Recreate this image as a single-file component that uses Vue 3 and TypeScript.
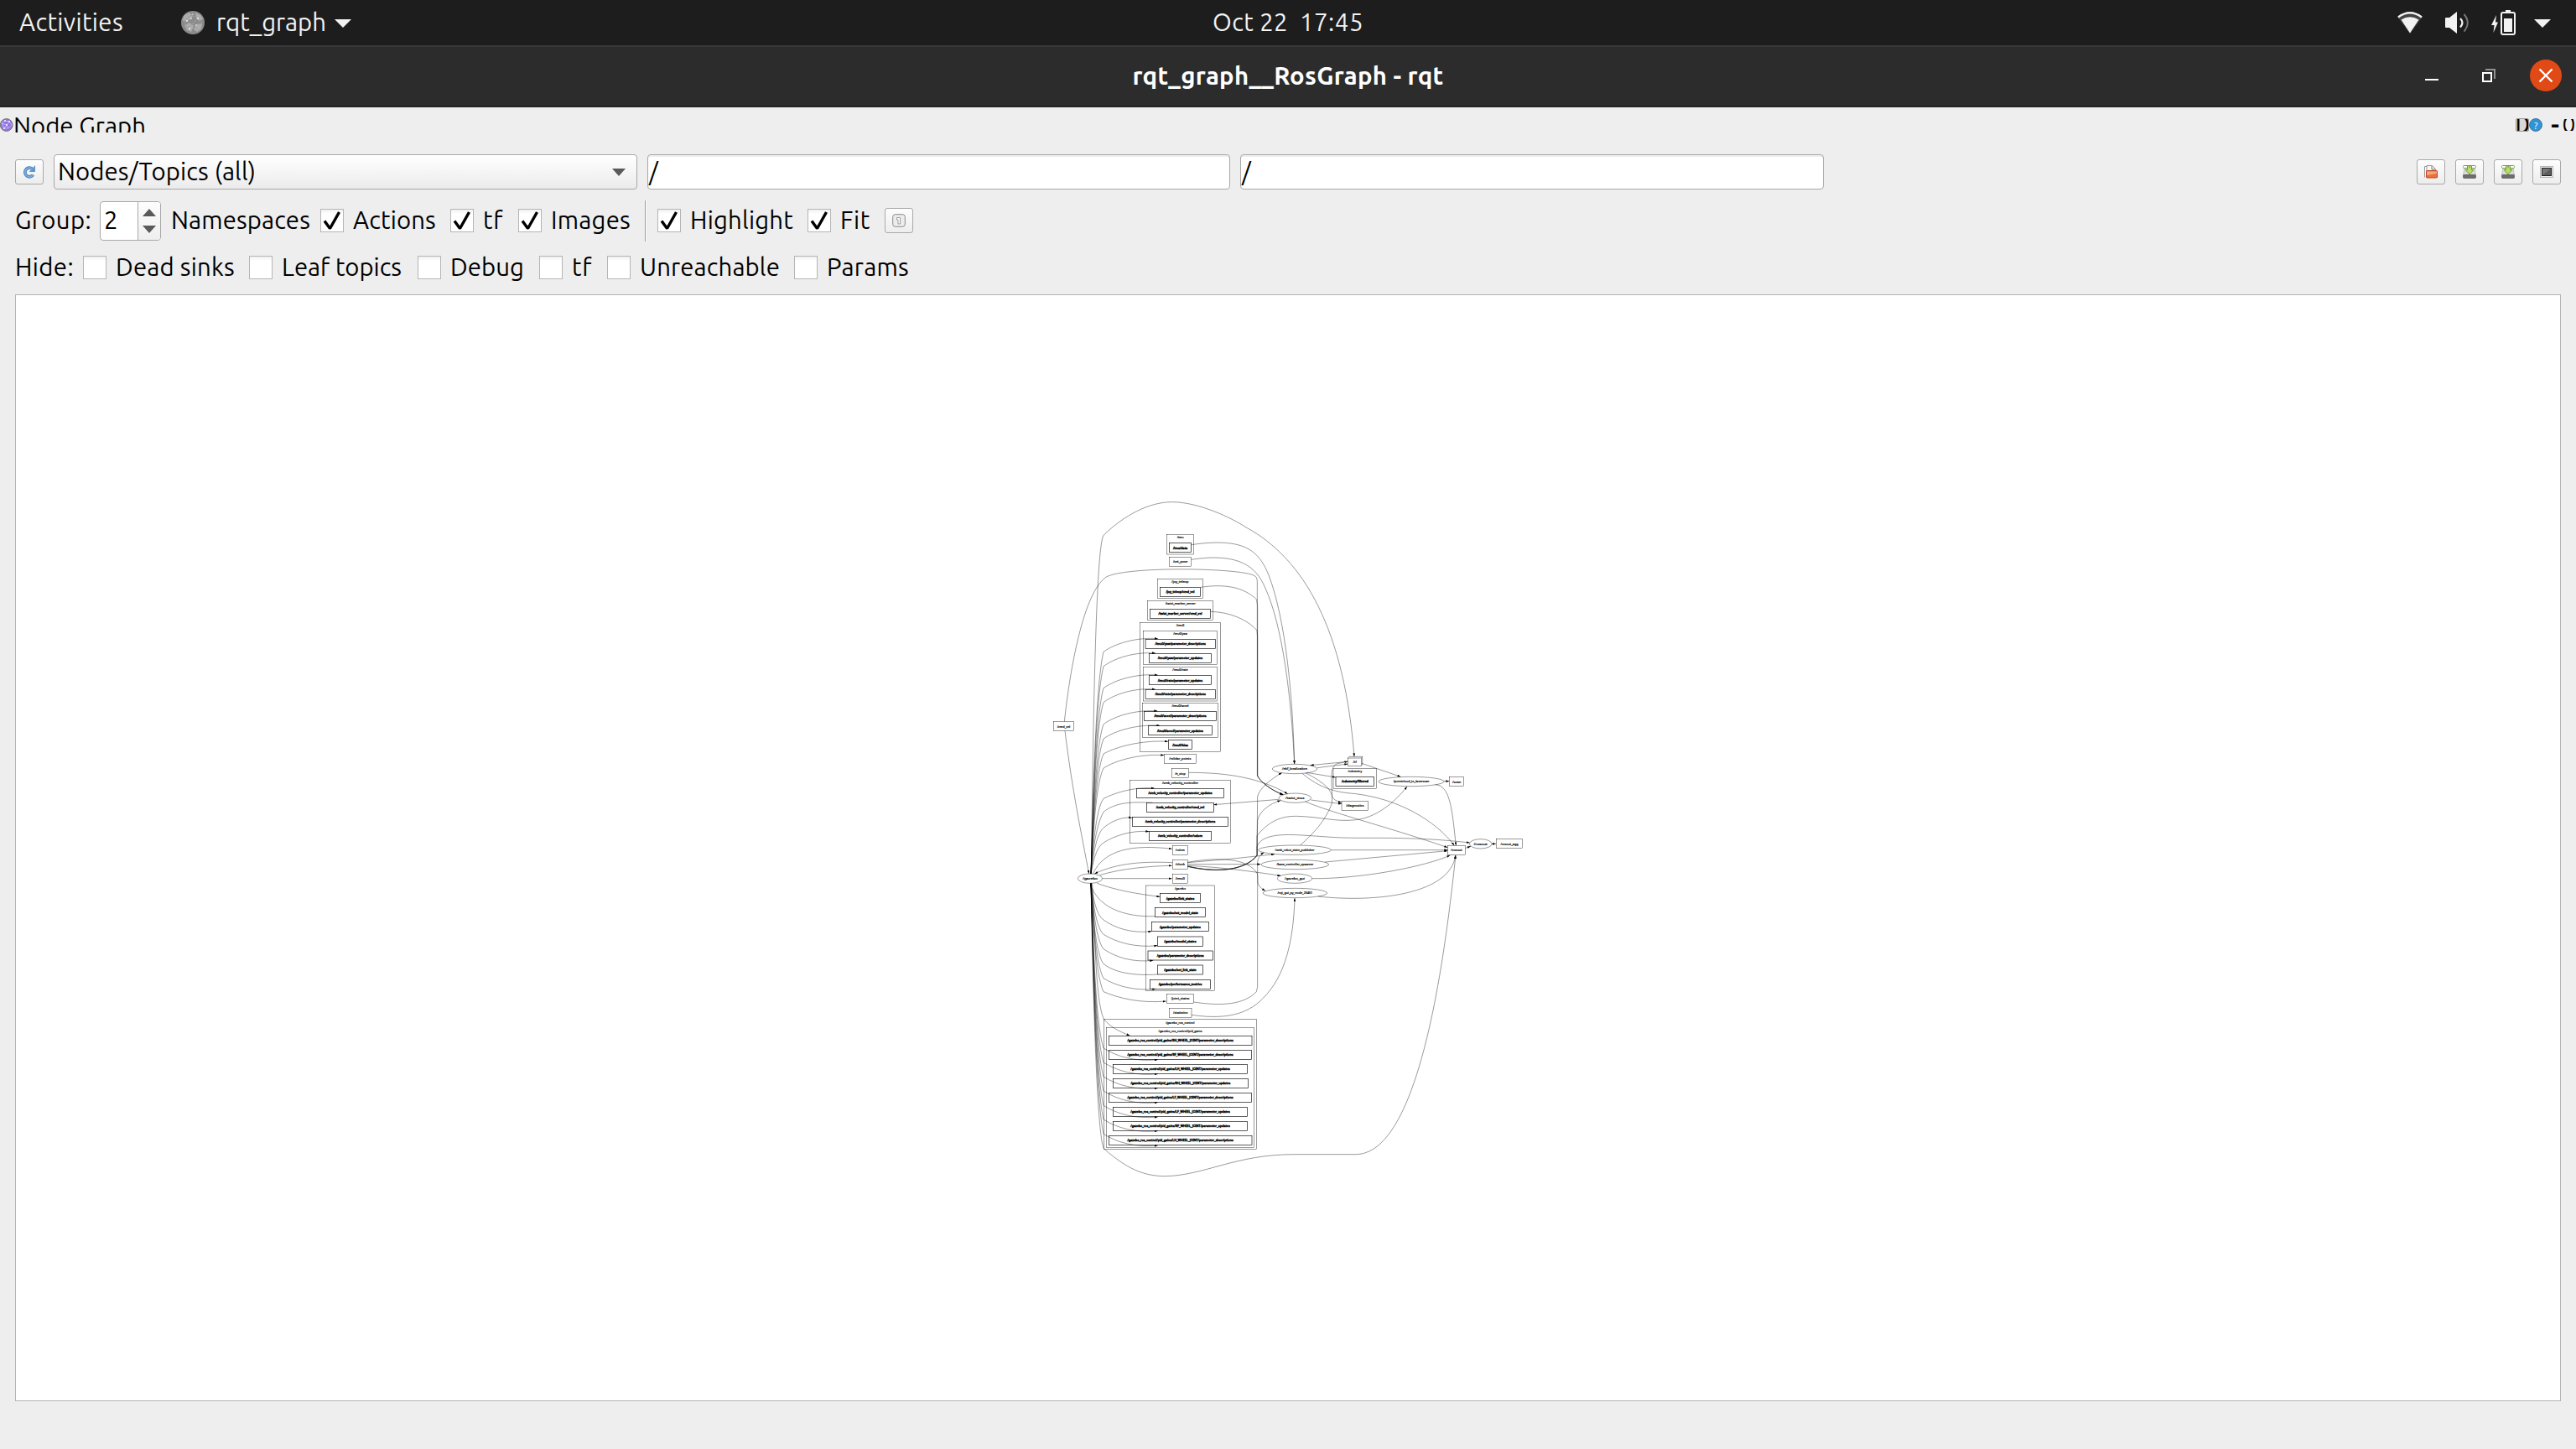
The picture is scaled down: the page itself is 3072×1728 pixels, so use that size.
<script setup lang="ts">
type Box = [label: string, x1: number, y1: number, x2: number, y2: number]
type Oval = [label: string, cx: number, cy: number, rx: number]

// Spaces the letters of a label so that it takes the given width in pixels.
const vFit = {
  mounted(el: HTMLElement, binding: { value: number }) {
    el.style.letterSpacing = '0px'
    const natural = el.getBoundingClientRect().width
    const count = (el.textContent ?? '').length
    el.style.letterSpacing = `${(binding.value - natural) / count}px`
  },
}

const groupOptions = [
  { label: 'Actions', text: 99, width: 116 },
  { label: 'tf', text: 24, width: 42 },
  { label: 'Images', text: 95, width: 112 },
]
const viewOptions = [
  { label: 'Highlight', text: 123, width: 140 },
  { label: 'Fit', text: 36, width: 53 },
]
const hideOptions = [
  { label: 'Dead sinks', text: 142, width: 159 },
  { label: 'Leaf topics', text: 143, width: 162 },
  { label: 'Debug', text: 88, width: 106 },
  { label: 'tf', text: 24, width: 42 },
  { label: 'Unreachable', text: 167, width: 184 },
  { label: 'Params', text: 98, width: 110 },
]

const clusters: Box[] = [
  ['/imu', 455, 172, 550, 243],
  ['/joy_teleop', 421, 331, 583, 401],
  ['/twist_marker_server', 386, 409, 620, 479],
  ['/imu0', 358, 487, 647, 949],
  ['/imu0/yaw', 370, 517, 635, 638],
  ['/imu0/rate', 370, 646, 635, 768],
  ['/imu0/accel', 367, 775, 638, 898],
  ['/smb_velocity_controller', 322, 1051, 683, 1276],
  ['/gazebo', 379, 1428, 626, 1805],
  ['/gazebo_ros_control', 229, 1907, 775, 2372],
  ['/gazebo_ros_control/pid_gains', 238, 1937, 767, 2365],
  ['/odometry', 1050, 1009, 1205, 1081],
]

const pid = '/gazebo_ros_control/pid_gains/'
const nested: Box[] = [
  ['/imu/data', 463, 203, 542, 236],
  ['/joy_teleop/cmd_vel', 430, 361, 575, 394],
  ['/twist_marker_server/cmd_vel', 394, 439, 611, 472],
  ['/imu0/yaw/parameter_descriptions', 378, 547, 628, 580],
  ['/imu0/yaw/parameter_updates', 391, 598, 613, 631],
  ['/imu0/rate/parameter_updates', 391, 677, 613, 710],
  ['/imu0/rate/parameter_descriptions', 378, 727, 628, 760],
  ['/imu0/accel/parameter_descriptions', 374, 805, 631, 838],
  ['/imu0/accel/parameter_updates', 388, 857, 616, 890],
  ['/imu0/bias', 460, 908, 545, 941],
  ['/smb_velocity_controller/parameter_updates', 346, 1081, 659, 1114],
  ['/smb_velocity_controller/cmd_vel', 383, 1132, 622, 1165],
  ['/smb_velocity_controller/parameter_descriptions', 331, 1183, 674, 1216],
  ['/smb_velocity_controller/odom', 392, 1234, 613, 1267],
  ['/gazebo/link_states', 431, 1457, 574, 1490],
  ['/gazebo/set_model_state', 412, 1508, 593, 1541],
  ['/gazebo/parameter_updates', 400, 1559, 604, 1592],
  ['/gazebo/model_states', 421, 1611, 583, 1645],
  ['/gazebo/parameter_descriptions', 387, 1662, 619, 1695],
  ['/gazebo/set_link_state', 421, 1713, 584, 1746],
  ['/gazebo/performance_metrics', 395, 1765, 610, 1798],
  [pid + 'RH_WHEEL_JOINT/parameter_descriptions', 247, 1966, 759, 2000],
  [pid + 'RF_WHEEL_JOINT/parameter_descriptions', 247, 2017, 758, 2051],
  [pid + 'LH_WHEEL_JOINT/parameter_updates', 262, 2068, 743, 2102],
  [pid + 'RH_WHEEL_JOINT/parameter_updates', 262, 2119, 745, 2153],
  [pid + 'LF_WHEEL_JOINT/parameter_descriptions', 247, 2170, 758, 2204],
  [pid + 'LF_WHEEL_JOINT/parameter_updates', 262, 2221, 743, 2255],
  [pid + 'RF_WHEEL_JOINT/parameter_updates', 262, 2272, 743, 2306],
  [pid + 'LH_WHEEL_JOINT/parameter_descriptions', 247, 2323, 759, 2357],
  ['/odometry/filtered', 1059, 1039, 1196, 1073],
]

const topics: Box[] = [
  ['/set_pose', 463, 253, 542, 286],
  ['/cmd_vel', 49, 842, 122, 875],
  ['/rslidar_points', 445, 959, 559, 991],
  ['/e_stop', 472, 1010, 533, 1043],
  ['/odom', 475, 1285, 529, 1318],
  ['/clock', 475, 1336, 529, 1369],
  ['/imu0', 475, 1387, 529, 1420],
  ['/joint_states', 454, 1816, 551, 1849],
  ['/statistics', 463, 1867, 543, 1900],
  ['/diagnostics', 1080, 1126, 1175, 1159],
  ['/scan', 1466, 1040, 1517, 1073],
  ['/rosout', 1459, 1285, 1523, 1318],
  ['/rosout_agg', 1633, 1262, 1727, 1295],
]

const ovals: Oval[] = [
  ['/gazebo', 180, 1403, 44],
  ['/ekf_localization', 912, 1011, 80],
  ['/twist_mux', 913, 1115, 58],
  ['/smb_robot_state_publisher', 912, 1301, 130],
  ['/base_controller_spawner', 913, 1353, 121],
  ['/gazebo_gui', 912, 1403, 62],
  ['/rqt_gui_py_node_23451', 913, 1455, 115],
  ['/pointcloud_to_laserscan', 1329, 1056, 117],
  ['/rosout', 1577, 1279, 40],
]

// Edges that leave /gazebo upwards: bend height, then the arrow's tip.
const upward: [number, number, number][] = [
  [592, 423, 545],
  [644, 414, 597],
  [722, 422, 675],
  [773, 413, 726],
  [851, 421, 804],
  [903, 430, 856],
  [957, 459, 913],
  [1008, 445, 962],
  [1117, 410, 1080],
  [1222, 330, 1186],
  [1275, 391, 1235],
]
const downward: [number, number, number][] = [
  [1551, 400, 1592],
  [1603, 421, 1643],
  [1655, 406, 1696],
  [1760, 415, 1798],
  [1808, 452, 1842],
  [2010, 422, 2051],
  [2061, 422, 2102],
  [2112, 422, 2153],
  [2163, 422, 2204],
  [2215, 422, 2256],
  [2265, 422, 2306],
  [2317, 422, 2358],
]

const arrows: string[] = [
  ...upward.map(([y, tx, ty]) => {
    const reach = (1386 - y) * 0.3
    return `M183 1386 C190 ${1386 - reach} 199 ${y + reach * 0.5} 228 ${y} C${228 + (tx - 228) * 0.2} ${ty + 18} ${228 + (tx - 228) * 0.6} ${ty - 6} ${tx} ${ty}`
  }),
  ...downward.map(([y, tx, ty]) => {
    const reach = (y - 1420) * 0.3
    return `M183 1420 C190 ${1420 + reach} 199 ${y - reach * 0.5} 228 ${y} C${228 + (tx - 228) * 0.25} ${ty - 10} ${228 + (tx - 228) * 0.6} ${ty + 8} ${tx} ${ty}`
  }),
  'M188 1420 C198 1620 200 1850 230 1907 C255 1937 285 1950 322 1965',
  'M190 1386 C230 1300 330 1280 473 1297',
  'M215 1391 C290 1367 400 1358 473 1357',
  'M475 1346 C380 1342 280 1345 196 1386',
  'M224 1403 H473',
  'M205 1420 C270 1445 360 1460 430 1468',
  'M412 1538 C300 1542 205 1505 181 1421',
  'M90 875 C115 1080 150 1250 176 1386',
  // long loops round the whole graph
  'M184 1386 C190 900 200 220 228 175 C300 105 390 56 473 56 C570 56 690 115 735 145 C950 260 1090 520 1125 967',
  'M183 1420 C190 1800 205 2340 230 2370 C310 2440 370 2468 450 2468 C590 2465 700 2390 910 2390 H1135 C1370 2380 1455 1620 1488 1320',
  'M88 842 C105 680 150 400 230 330 C270 285 700 290 765 318 Q777 322 778 340 V1035 C785 1050 820 1085 871 1103',
  'M576 361 C680 345 740 370 776 405 L779 430 V1035 C785 1052 822 1086 871 1103',
  'M611 448 C680 450 740 475 777 515 L779 540 V1035 C787 1053 822 1085 871 1103',
  'M542 209 C740 180 785 235 820 320 C880 480 905 750 911 993',
  'M542 262 C715 235 775 290 805 360 C870 500 900 760 911 993',
  'M533 1024 C680 1024 790 1045 887 1100',
  'M855 1120 L622 1139',
  // consumers of /clock
  'M529 1346 Q680 1335 840 1316',
  'M529 1352 H790',
  'M529 1357 C650 1362 760 1378 862 1393',
  'M529 1345 C640 1325 745 1330 778 1385 C784 1410 768 1425 807 1447',
  'M529 1359 C620 1380 730 1380 777 1320 L779 1110 C785 1080 830 1045 866 1025',
  'M529 1359 C620 1381 730 1380 777 1320 L779 1195 C785 1165 820 1135 862 1124',
  'M529 1360 C620 1382 730 1380 778 1320 L777 1250 C830 1185 880 1180 920 1180 C1000 1182 1060 1200 1120 1194 C1200 1190 1270 1130 1314 1074',
  'M529 1360 C620 1380 730 1381 778 1320 L777 1290 C790 1245 870 1245 920 1247 C1060 1255 1040 1258 1180 1258 C1350 1257 1450 1265 1538 1275',
  'M551 1845 C650 1860 730 1855 775 1808 L779 1790 V1345 C780 1328 790 1317 802 1310',
  'M543 1891 C640 1905 735 1900 800 1830 C880 1750 908 1620 912 1473',
  // sensor fusion, transforms and logging
  'M992 1007 L1102 993',
  'M1102 985 L968 998',
  'M955 1024 L1058 1041',
  'M950 1025 C1010 1055 1040 1080 1046 1110 Q1052 1125 1080 1131',
  'M940 1028 C990 1070 1040 1090 1100 1097 C1280 1110 1420 1200 1483 1285',
  'M970 1122 L1080 1136',
  'M950 1128 C1050 1170 1250 1220 1459 1292',
  'M932 1284 C980 1240 1020 1200 1045 1135 C1050 1080 1030 1000 1065 992 L1102 984',
  'M1042 1301 H1459',
  'M1020 1344 L1459 1304',
  'M974 1403 C1150 1405 1380 1360 1468 1320',
  'M995 1467 C1200 1490 1470 1460 1487 1320',
  'M1446 1055 H1465',
  'M1415 1067 C1470 1070 1475 1160 1489 1285',
  'M1523 1294 L1542 1288',
  'M1617 1279 H1632',
  'M1152 991 L1291 1039',
]
const lines: string[] = [
  'M183 1386 C190 1290 205 1205 228 1165 C270 1130 330 1128 403 1132',
  'M421 1746 C330 1752 265 1738 228 1708 C205 1680 190 1560 183 1420',
]

const boxText = (w: number) => w * 0.755 - 8
</script>

<template>
  <div class="screen">
    <header class="topbar">
      <div class="top-left">
        <span v-fit="124" class="txt">Activities</span>
        <svg class="app-icon" width="28" height="28" viewBox="0 0 28 28">
          <circle cx="14" cy="14" r="14" fill="#8b8b8b" />
          <path d="M3 6l6-4 5 3-2 5-6 2-4 0zM17 2l6 3 3 5-5 2-3-4zM4 17l6-3 5 4-3 7-5-2zM18 16l7-1-1 6-5 4-4-3z" fill="#adadad" />
          <path d="M4 12L12 5 20 9 25 15M7 21L14 15 20 9M14 15L20 22M4 12L7 21" stroke="#9c9c9c" fill="none" />
          <g fill="#f4f4f4"><circle cx="7" cy="12" r="1" /><circle cx="12" cy="9" r=".8" /><circle cx="20" cy="9" r="1" /><circle cx="10" cy="21" r="1" /><circle cx="18" cy="17" r=".8" /><circle cx="14" cy="4" r=".7" /></g>
        </svg>
        <span v-fit="131" class="txt">rqt_graph</span>
        <svg class="caret" width="20" height="10" viewBox="0 0 20 10"><path d="M0 0H20L10 10Z" fill="#f2f2f2" /></svg>
      </div>
      <div class="clock"><span v-fit="90" class="txt">Oct 22</span><span v-fit="76" class="txt">17:45</span></div>
      <div class="tray">
        <svg width="30" height="26" viewBox="0 0 30 26">
          <path d="M0 6Q15-5.500 30 6L15 26Z" fill="#8a8a8a" opacity=".35" />
          <path d="M1 6.500Q15-4 29 6.500" stroke="#f2f2f2" stroke-width="2.400" fill="none" />
          <path d="M4.500 9.500Q15 3 25.500 9.500L15 25.500Z" fill="#f2f2f2" />
        </svg>
        <svg width="30" height="26" viewBox="0 0 30 26">
          <path d="M0 8Q0 7 1 7H5L14 0V26L5 19H1Q0 19 0 18Z" fill="#f2f2f2" />
          <path d="M18 8Q23 13 18 18.500" stroke="#f2f2f2" stroke-width="2.200" fill="none" />
          <path d="M22.500 3Q31 13 22.500 23.500" stroke="#777" stroke-width="2" fill="none" />
        </svg>
        <svg width="30" height="30" viewBox="0 0 30 30">
          <path d="M6 6L0 18H3.500L2.500 27 8 14.500H5Z" fill="#f2f2f2" />
          <rect x="12" y="3" width="16" height="26" rx="2" fill="none" stroke="#f2f2f2" stroke-width="2" />
          <rect x="17" y="0" width="6" height="3" fill="#f2f2f2" />
          <rect x="15" y="10" width="10" height="16" fill="#f2f2f2" />
        </svg>
        <svg width="20" height="10" viewBox="0 0 20 10"><path d="M0 0H20L10 10Z" fill="#f2f2f2" /></svg>
      </div>
    </header>

    <div class="titlebar">
      <h1><span v-fit="371">rqt_graph__RosGraph - rqt</span></h1>
      <div class="window-buttons">
        <svg width="16" height="16" viewBox="0 0 16 16"><path d="M0 13H16" stroke="#fff" stroke-width="2" /></svg>
        <svg width="16" height="16" viewBox="0 0 16 16">
          <path d="M4 1H15V12" stroke="#909090" stroke-width="2" fill="none" />
          <rect x="1" y="5" width="10" height="10" fill="none" stroke="#fff" stroke-width="2" />
        </svg>
        <svg width="38" height="38" viewBox="0 0 38 38">
          <circle cx="19" cy="19" r="19" fill="#e04a16" />
          <path d="M11.500 11.500L26.500 26.500M26.500 11.500L11.500 26.500" stroke="#fff" stroke-width="2.400" />
        </svg>
      </div>
    </div>

    <div class="dock">
      <svg width="16" height="16" viewBox="0 0 16 16">
        <circle cx="7.700" cy="8" r="7.400" fill="#9175e0" stroke="#777" />
        <path d="M2 6L6 3 11 4 14 8 10 12 5 12 2 6L8 8 11 4M8 8L10 12M8 8L5 12" stroke="#cdbdf6" stroke-width=".8" fill="none" />
        <g fill="#fff"><circle cx="6" cy="3" r=".9" /><circle cx="11" cy="4" r=".9" /><circle cx="8" cy="8" r=".9" /><circle cx="5" cy="12" r=".9" /></g>
      </svg>
      <div class="dock-title"><span v-fit="158" class="txt">Node Graph</span></div>
      <div class="dock-buttons">
        <span class="clip boxed"><b>D</b></span>
        <svg width="16" height="16" viewBox="0 0 16 16">
          <circle cx="8" cy="8" r="7.500" fill="#2d94d8" stroke="#47799c" />
          <text x="8" y="12.500" text-anchor="middle" font-size="12" fill="#fff">?</text>
        </svg>
        <span class="clip dash">-</span>
        <span class="clip round"><b>O</b></span>
      </div>
    </div>

    <div class="row filter-row">
      <button class="tool">
        <svg width="16" height="16" viewBox="0 0 16 16">
          <path d="M12.500 11.500A5.300 5.300 0 1 1 11.500 4.300" fill="none" stroke="#4a83bd" stroke-width="3.800" />
          <path d="M12.500 11.500A5.300 5.300 0 1 1 11.500 4.300" fill="none" stroke="#79aadb" stroke-width="2" />
          <path d="M15 0V8H7.500L10 5.500 12.500 3Z" fill="#5f97cf" />
        </svg>
      </button>
      <div class="combo">
        <span v-fit="236" class="txt">Nodes/Topics (all)</span>
        <svg width="16" height="9" viewBox="0 0 16 9"><path d="M0 0H16L8 9Z" fill="#5a5a5a" /></svg>
      </div>
      <div class="field name-filter"><span class="txt">/</span></div>
      <div class="field"><span class="txt">/</span></div>
      <div class="file-tools">
        <button class="tool">
          <svg width="16" height="16" viewBox="0 0 16 16">
            <path d="M.5 14.500V1.500H3.500M3 14V.5H9.500L13.500 4.500V8" fill="#f8f8f8" stroke="#9a9a9a" />
            <path d="M9 1V5H13" fill="none" stroke="#777" />
            <rect x="2.500" y="6.500" width="13" height="8.500" rx=".8" fill="#e8703c" stroke="#c2421c" />
            <path d="M3 7.500H15V10L3 12Z" fill="#f4a67c" />
          </svg>
        </button>
        <button v-for="n in 2" :key="n" class="tool">
          <svg width="16" height="16" viewBox="0 0 16 16">
            <path d="M2 3H14L15.500 12H.5Z" fill="#dcdcdc" stroke="#aaa" stroke-width=".6" />
            <rect x=".5" y="11.500" width="15" height="4" rx="1" fill="#6d6d6d" stroke="#444" stroke-width=".6" />
            <rect x=".5" y=".5" width="15" height="3" rx="1" fill="#fff" stroke="#6fa33a" />
            <path d="M5.500 1V5.500H3L8 11 13 5.500H10.500V1" fill="#b9dc68" stroke="#6fa33a" />
            <path d="M8 0V3" stroke="#777" />
          </svg>
        </button>
        <button class="tool">
          <svg width="16" height="16" viewBox="0 0 16 16">
            <rect x=".5" y="1.500" width="15" height="13" fill="#eee" stroke="#b4b4b4" />
            <rect x="2.500" y="3.500" width="11" height="9" fill="#5c5c5c" stroke="#222" />
            <path d="M3 4H13L3 12Z" fill="#777" />
          </svg>
        </button>
      </div>
    </div>

    <div class="row group-row">
      <span class="cell group-label"><span v-fit="91" class="txt">Group:</span></span>
      <div class="spin">
        <span class="txt value">2</span>
        <div class="steps">
          <svg width="16" height="9" viewBox="0 0 16 9"><path d="M0 9H16L8 0Z" fill="#5a5a5a" /></svg>
          <svg width="16" height="9" viewBox="0 0 16 9"><path d="M0 0H16L8 9Z" fill="#5a5a5a" /></svg>
        </div>
      </div>
      <span class="cell namespaces"><span v-fit="166" class="txt">Namespaces</span></span>
      <label v-for="o in groupOptions" :key="o.label" class="check">
        <i><svg width="28" height="28" viewBox="0 0 28 28"><path d="M5 14.500L11.500 23.500 22.500 4" fill="none" stroke="#000" stroke-width="3.400" stroke-linejoin="bevel" /></svg></i>
        <span class="cell" :style="{ width: o.width + 'px' }"><span v-fit="o.text" class="txt">{{ o.label }}</span></span>
      </label>
      <hr />
      <label v-for="o in viewOptions" :key="o.label" class="check">
        <i><svg width="28" height="28" viewBox="0 0 28 28"><path d="M5 14.500L11.500 23.500 22.500 4" fill="none" stroke="#000" stroke-width="3.400" stroke-linejoin="bevel" /></svg></i>
        <span class="cell" :style="{ width: o.width + 'px' }"><span v-fit="o.text" class="txt">{{ o.label }}</span></span>
      </label>
      <button class="tool">
        <svg width="16" height="16" viewBox="0 0 16 16">
          <rect x=".7" y=".7" width="14.600" height="14.600" rx="3" fill="#ececec" stroke="#8c8c8c" />
          <path d="M5.500 4.500H9.500V12H7V7H5.500Z" fill="#fff" stroke="#8c8c8c" stroke-width=".8" />
        </svg>
      </button>
    </div>

    <div class="row hide-row">
      <span class="cell hide-label"><span v-fit="70" class="txt">Hide:</span></span>
      <label v-for="(o, i) in hideOptions" :key="i" class="check">
        <i></i>
        <span class="cell" :style="{ width: o.width + 'px' }"><span v-fit="o.text" class="txt">{{ o.label }}</span></span>
      </label>
    </div>

    <main class="canvas">
      <svg class="graph" width="640" height="860" viewBox="0 0 1920 2580">
        <defs>
          <marker id="tip" viewBox="0 0 12 8" refX="12" refY="4" markerWidth="12" markerHeight="8" markerUnits="userSpaceOnUse" orient="auto">
            <path d="M0 0L12 4L0 8Z" />
          </marker>
        </defs>
        <g class="cluster">
          <template v-for="[name, x1, y1, x2, y2] in clusters" :key="name">
            <rect :x="x1" :y="y1" :width="x2 - x1" :height="y2 - y1" />
            <text :x="(x1 + x2) / 2" :y="y1 + 15" :textLength="name.length * 5.3 + 2" lengthAdjust="spacingAndGlyphs">{{ name }}</text>
          </template>
        </g>
        <g class="edges">
          <path v-for="d in arrows" :key="d" :d="d" marker-end="url(#tip)" />
          <path v-for="d in lines" :key="d" :d="d" />
        </g>
        <g class="nested">
          <template v-for="[name, x1, y1, x2, y2] in nested" :key="name">
            <rect :x="x1" :y="y1" :width="x2 - x1" :height="y2 - y1" />
            <text :x="(x1 + x2) / 2" :y="(y1 + y2) / 2 + 4" :textLength="boxText(x2 - x1)" lengthAdjust="spacingAndGlyphs">{{ name }}</text>
          </template>
        </g>
        <g class="topic">
          <template v-for="[name, x1, y1, x2, y2] in topics" :key="name">
            <rect :x="x1" :y="y1" :width="x2 - x1" :height="y2 - y1" />
            <text :x="(x1 + x2) / 2" :y="(y1 + y2) / 2 + 4" :textLength="boxText(x2 - x1)" lengthAdjust="spacingAndGlyphs">{{ name }}</text>
          </template>
          <rect x="1102" y="972" width="48" height="28" />
          <path d="M1102 972L1107 967H1154V996L1150 1000M1150 972L1154 967" />
          <text x="1127" y="989">/tf</text>
          <template v-for="[name, cx, cy, rx] in ovals" :key="name + cx">
            <ellipse :cx="cx" :cy="cy" :rx="rx" ry="17" />
            <text :x="cx" :y="cy + 4" :textLength="rx * 1.02 + 8" lengthAdjust="spacingAndGlyphs">{{ name }}</text>
          </template>
        </g>
      </svg>
    </main>
  </div>
</template>

<style>
body {
  background: #eee;
}
</style>

<style scoped>
.screen {
  width: 3072px;
  height: 1728px;
  overflow: hidden;
  display: flex;
  flex-direction: column;
  background: #eee;
  color: #000;
  font: 29.3px/36px Ubuntu, "Noto Sans", sans-serif;
}
.screen * {
  box-sizing: border-box;
}
.txt {
  display: inline-block;
  white-space: pre;
}
svg {
  display: block;
  flex: none;
}
.topbar {
  flex: none;
  height: 54px;
  background: #1d1d1d;
  color: #f2f2f2;
  display: grid;
  grid-template-columns: 1fr auto 1fr;
  align-items: center;
}
.top-left {
  display: flex;
  align-items: center;
  padding-left: 23px;
}
.app-icon {
  margin: 0 14px 0 69px;
}
.caret {
  margin: 2px 0 0 10px;
}
.clock {
  display: flex;
  gap: 14px;
}
.tray {
  display: flex;
  align-items: center;
  justify-content: flex-end;
  gap: 25px;
  padding-right: 30px;
}
.tray svg:first-child {
  margin-right: 2px;
}
.tray svg:last-child {
  margin: 2px 0 0 -4px;
}
.titlebar {
  flex: none;
  height: 74px;
  border-top: 2px solid #383838;
  border-bottom: 2px solid #232323;
  background: #2c2c2c;
  color: #fff;
  display: flex;
  align-items: center;
  justify-content: center;
  position: relative;
}
h1 {
  margin: 0;
  font-size: 29.3px;
  line-height: 36px;
  font-weight: 700;
  white-space: pre;
}
h1 span {
  display: inline-block;
}
.window-buttons {
  position: absolute;
  right: 17px;
  top: 15px;
  display: flex;
  align-items: center;
}
.window-buttons svg:nth-child(2) {
  margin: 0 41px 0 52px;
}
.dock {
  flex: none;
  height: 18px;
  margin-top: 12px;
  display: flex;
  align-items: center;
}
.dock-title {
  height: 18px;
  overflow: hidden;
  display: flex;
  align-items: flex-start;
}
.dock-title .txt {
  margin-top: -7px;
}
.dock-buttons {
  margin-left: auto;
  display: flex;
  align-items: center;
  height: 16px;
}
.clip {
  display: flex;
  justify-content: center;
  align-items: center;
  flex: none;
  height: 16px;
  width: 16px;
  overflow: hidden;
}
.clip b {
  flex: none;
  font-weight: 500;
}
.boxed {
  border: 1px solid #999;
  border-radius: 2px;
  background: #d8d8d8;
}
.boxed b {
  transform: scaleX(0.8);
}
.dash {
  width: 14px;
  margin-left: 8px;
  font-weight: 700;
}
.round {
  width: 18px;
  height: 14px;
}
.round b {
  transform: scaleX(0.65);
}
.row {
  flex: none;
  display: flex;
  align-items: center;
  padding: 0 18px;
}
.filter-row {
  height: 42px;
  margin-top: 26px;
  gap: 12px;
}
.tool {
  flex: none;
  width: 34px;
  height: 30px;
  padding: 0;
  border: 1px solid #a9a9a9;
  border-radius: 3px;
  background: linear-gradient(#fdfdfd, #ededed);
  display: flex;
  align-items: center;
  justify-content: center;
}
.combo,
.field {
  flex: none;
  width: 696px;
  height: 42px;
  border: 1px solid #a8a8a8;
  border-radius: 4px;
  display: flex;
  align-items: center;
}
.combo {
  background: linear-gradient(#fff, #ebebeb);
  justify-content: space-between;
  padding: 0 13px 0 4px;
}
.field {
  background: #fff;
  box-shadow: inset 0 2px 1px #ededed;
  padding-left: 1px;
}
.name-filter {
  width: 695px;
}
.file-tools {
  margin-left: auto;
  display: flex;
  gap: 12px;
}
.group-row {
  height: 50px;
  margin-top: 12px;
}
.cell {
  display: block;
  flex: none;
}
.group-label {
  width: 101px;
}
.spin {
  flex: none;
  width: 73px;
  height: 47px;
  border: 1px solid #a8a8a8;
  border-radius: 4px;
  background: #fff;
  display: flex;
  align-items: center;
}
.value {
  width: 44px;
  padding-left: 4px;
}
.steps {
  height: 100%;
  flex: 1;
  border-left: 1px solid #a8a8a8;
  background: linear-gradient(#fdfdfd, #efefef);
  border-radius: 0 3px 3px 0;
  display: flex;
  flex-direction: column;
  align-items: center;
  justify-content: center;
  gap: 11px;
}
.namespaces {
  width: 178px;
  margin-left: 12px;
}
.check {
  display: flex;
  align-items: center;
}
.check i {
  flex: none;
  width: 28px;
  height: 28px;
  margin-right: 11px;
  border: 1px solid #b5b5b5;
  background: linear-gradient(#f0f0f0, #fff 5px);
}
.check i svg {
  margin: -1px;
}
hr {
  width: 2px;
  height: 49px;
  margin: 0 13px 0 0;
  border: 0;
  border-left: 1px solid #a0a0a0;
  background: #fafafa;
}
.hide-row {
  height: 36px;
  margin-top: 13px;
}
.hide-label {
  width: 81px;
}
.canvas {
  flex: none;
  position: relative;
  width: 3036px;
  height: 1320px;
  margin: 14px 0 0 18px;
  border: 1px solid #b4b4b4;
  background: #fff;
}
.graph {
  position: absolute;
  left: 1221px;
  top: 228px;
}
.graph text {
  font: 11.5px "Noto Sans", sans-serif;
  text-anchor: middle;
  fill: #000;
}
.graph rect,
.graph ellipse,
.edges path,
.topic path {
  fill: none;
  stroke: #000;
  stroke-width: 1.2;
}
.graph .nested rect {
  stroke-width: 1.9;
}
.graph .nested text {
  stroke: #000;
  stroke-width: 1.4;
}
.graph .topic text,
.graph .cluster text {
  stroke: #000;
  stroke-width: 0.6;
}
</style>
